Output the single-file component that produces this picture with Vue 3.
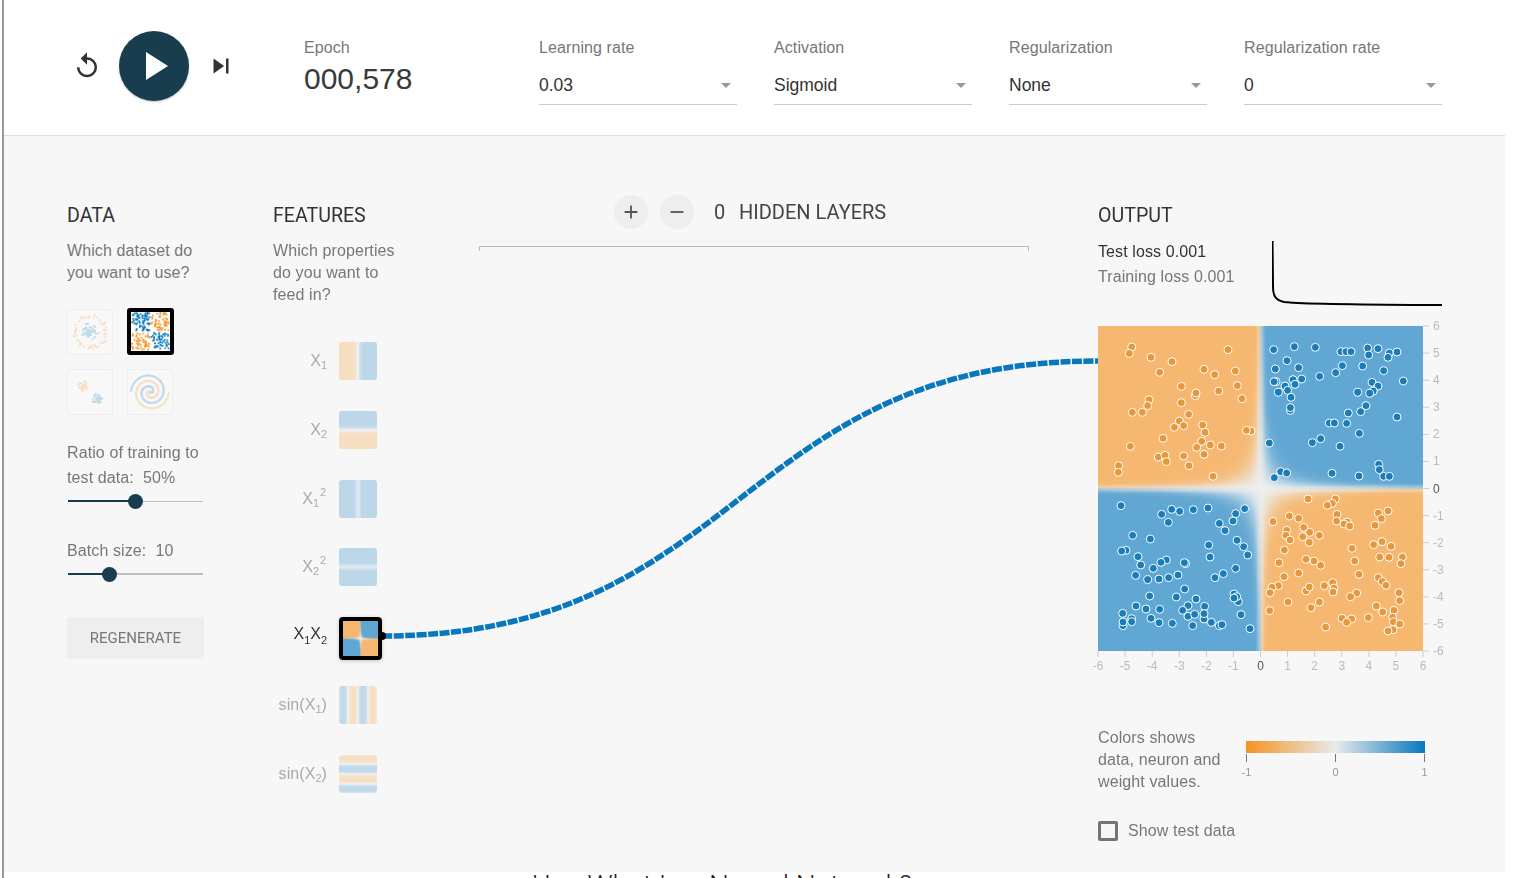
<script setup>
const selects = [
  { label: 'Learning rate', value: '0.03' },
  { label: 'Activation', value: 'Sigmoid' },
  { label: 'Regularization', value: 'None' },
  { label: 'Regularization rate', value: '0' },
]

const features = [
  { name: 'X', sub: '1', fn: (x) => Math.tanh(x * 1.1) },
  { name: 'X', sub: '2', fn: (x, y) => Math.tanh(y * 1.1) },
  { name: 'X', sub: '1', sup: '2', fn: (x) => 0.4 + 0.6 * Math.tanh(x * x) },
  { name: 'X', sub: '2', sup: '2', fn: (x, y) => 0.4 + 0.6 * Math.tanh(y * y) },
  { name: 'X', sub: '1', name2: 'X', sub2: '2', active: true, fn: (x, y) => Math.tanh(2 * x * y) },
  { name: 'sin(X', sub: '1', close: ')', fn: (x) => Math.tanh(1.6 * Math.sin(x)) },
  { name: 'sin(X', sub: '2', close: ')', fn: (x, y) => Math.tanh(1.6 * Math.sin(y)) },
]

// colour ramp of the playground: orange, light grey, blue
function ramp(t) {
  const a = t < 0 ? [245, 147, 34] : [8, 119, 189]
  const b = [232, 234, 235]
  const k = Math.abs(t)
  return a.map((v, i) => b[i] + (v - b[i]) * k)
}

function paintHeat(el, fn) {
  if (!el) return
  const ctx = el.getContext('2d')
  const img = ctx.createImageData(el.width, el.height)
  for (let py = 0; py < el.height; py++) {
    for (let px = 0; px < el.width; px++) {
      const x = ((px + 0.5) / el.width) * 12 - 6
      const y = 6 - ((py + 0.5) / el.height) * 12
      const c = ramp(fn(x, y))
      const i = (py * el.width + px) * 4
      img.data[i] = c[0]
      img.data[i + 1] = c[1]
      img.data[i + 2] = c[2]
      img.data[i + 3] = 160
    }
  }
  ctx.putImageData(img, 0, 0)
}

// small seeded random so the thumbnails come out the same each time
let seed = 42
function rnd() {
  seed = (seed * 16807) % 2147483647
  return seed / 2147483647
}

function circlePts() {
  const pts = []
  for (let i = 0; i < 60; i++) {
    const a = rnd() * Math.PI * 2
    const inner = rnd() * 2.4
    pts.push([Math.cos(a) * inner, Math.sin(a) * inner, 1])
    const b = rnd() * Math.PI * 2
    const r = 3.7 + rnd() * 1.2
    pts.push([Math.cos(b) * r, Math.sin(b) * r, -1])
  }
  return pts
}

function xorPts() {
  const pts = []
  for (let i = 0; i < 240; i++) {
    const x = (rnd() * 5.4 + 0.3) * (rnd() < 0.5 ? -1 : 1)
    const y = (rnd() * 5.4 + 0.3) * (rnd() < 0.5 ? -1 : 1)
    pts.push([x, y, x * y > 0 ? 1 : -1])
  }
  return pts
}

function gaussPts() {
  const pts = []
  for (let i = 0; i < 45; i++) {
    const a = rnd() * Math.PI * 2
    const r = rnd() * 1.5
    pts.push([-1.9 + Math.cos(a) * r, -1.7 + Math.sin(a) * r, -1])
    pts.push([1.9 + Math.sin(a) * r, 1.9 + Math.cos(a) * r, 1])
  }
  return pts
}

function spiralPts() {
  const pts = []
  for (let i = 0; i < 170; i++) {
    const r = (i / 170) * 5.2
    const a = (i / 170) * 1.75 * Math.PI * 2
    pts.push([r * Math.sin(a), r * Math.cos(a), 1])
    pts.push([-r * Math.sin(a), -r * Math.cos(a), -1])
  }
  return pts
}

const datasets = [
  { pts: circlePts() },
  { pts: xorPts(), active: true },
  { pts: gaussPts() },
  { pts: spiralPts() },
]

function paintData(el, pts) {
  if (!el) return
  const ctx = el.getContext('2d')
  const s = el.width / 12
  for (const [x, y, c] of pts) {
    ctx.fillStyle = c > 0 ? '#0877bd' : '#f59322'
    ctx.fillRect((x + 6) * s - 1, (y + 6) * s - 1, 1.9, 1.9)
  }
}

// dot positions read off the reference, in px inside the 325px heatmap
const top = (p) => [(p[0] - 24) / 3, (p[1] - 378) / 3]
const bottom = (p) => [(p[0] - 24) / 3, 154 + p[1] / 3]

const orangeDots = [
  ...[[125,441],[118,460],[183,472],[246,485],[414,449],[209,517],[342,508],[374,524],[436,513],[274,559],[442,557],[386,573],[316,587],[318,579],[177,599],[173,617],[127,637],[157,637],[274,608],[456,596],[296,643],[268,663],[281,677],[253,682],[338,675],[345,697],[483,693],[469,691],[219,715],[335,724],[361,735],[394,738],[320,742],[121,739],[342,763],[205,771],[225,766],[229,785],[281,768],[297,797],[86,797],[85,817],[369,829]].map(top),
  ...[[654,57],[736,57],[727,70],[712,76],[741,103],[598,108],[626,115],[549,125],[740,123],[865,99],[894,93],[874,116],[855,136],[772,126],[762,132],[779,138],[641,142],[590,151],[659,157],[588,166],[638,170],[688,166],[600,180],[658,187],[851,194],[876,185],[903,199],[583,210],[786,205],[869,231],[897,232],[937,231],[648,238],[672,243],[692,256],[794,243],[567,248],[933,251],[626,279],[807,283],[582,290],[865,293],[877,305],[888,316],[565,317],[546,322],[540,338],[648,333],[658,321],[703,317],[728,308],[732,324],[729,336],[927,338],[800,339],[782,350],[929,362],[594,366],[688,366],[663,383],[859,378],[878,396],[539,392],[912,391],[908,412],[910,425],[929,432],[835,413],[756,415],[785,417],[770,427],[707,441],[909,449],[894,453]].map(bottom),
]

const blueDots = [
  ...[[551,449],[613,440],[676,442],[753,455],[768,455],[783,455],[833,444],[864,446],[836,465],[898,459],[921,456],[894,472],[591,482],[556,507],[626,503],[757,497],[818,498],[881,512],[737,518],[689,529],[609,539],[635,537],[558,545],[552,545],[615,553],[585,558],[593,571],[565,577],[603,592],[940,543],[846,547],[864,558],[850,573],[839,580],[803,577],[828,617],[812,635],[775,639],[601,631],[601,623],[718,669],[733,669],[770,670],[921,651],[808,700],[692,716],[667,728],[538,729],[750,739],[866,793],[868,809],[572,815],[590,819],[726,820],[807,828],[881,829],[898,829],[553,833]].map(top),
  ...[[93,77],[215,103],[245,88],[269,94],[310,89],[354,84],[437,101],[464,86],[429,123],[235,127],[388,130],[405,152],[128,166],[181,177],[441,181],[461,200],[356,195],[108,211],[95,213],[144,230],[360,231],[473,225],[229,240],[213,247],[287,251],[283,248],[152,255],[190,265],[437,265],[400,281],[375,293],[137,286],[173,299],[207,297],[236,293],[264,285],[284,327],[179,348],[259,351],[318,357],[432,342],[445,365],[440,350],[432,354],[138,378],[168,387],[209,388],[294,377],[344,379],[278,391],[342,417],[342,401],[294,409],[314,403],[183,415],[453,404],[98,400],[125,416],[125,425],[99,437],[99,426],[207,428],[247,430],[364,427],[308,437],[388,437],[396,434],[480,446]].map(bottom),
]

const ticks = [-6, -5, -4, -3, -2, -1, 0, 1, 2, 3, 4, 5, 6]
const tickPos = (v) => ((v + 6) / 12) * 325
</script>

<template>
  <div class="shell">
    <header class="top">
      <div class="player">
        <svg class="icon" viewBox="0 0 24 24"><path d="M12 5V1L7 6l5 5V7c3.31 0 6 2.69 6 6s-2.69 6-6 6-6-2.69-6-6H4c0 4.42 3.58 8 8 8s8-3.58 8-8-3.58-8-8-8z" /></svg>
        <div class="play">
          <svg viewBox="0 0 24 24"><path d="M8 5v14l11-7z" /></svg>
        </div>
        <svg class="icon" viewBox="0 0 24 24"><path d="M6 18l8.5-6L6 6v12zM16 6v12h2V6h-2z" /></svg>
      </div>
      <div class="epoch">
        <div class="field-label">Epoch</div>
        <div class="epoch-value">000,578</div>
      </div>
      <div v-for="s in selects" :key="s.label" class="select">
        <div class="field-label">{{ s.label }}</div>
        <div class="select-box">
          <span>{{ s.value }}</span>
          <i class="arrow"></i>
        </div>
      </div>
    </header>

    <main class="main">
      <section class="col-data">
        <h4>DATA</h4>
        <p class="desc">Which dataset do<br />you want to use?</p>
        <div class="datasets">
          <div v-for="(d, i) in datasets" :key="i" class="dataset" :class="{ on: d.active }">
            <canvas width="44" height="44" :ref="(el) => paintData(el, d.pts)"></canvas>
          </div>
        </div>
        <p class="desc slider-label ratio">Ratio of training to<br />test data:&nbsp; 50%</p>
        <div class="slider"><div class="fill" style="width: 50%"></div><div class="thumb" style="left: 50%"></div></div>
        <p class="desc slider-label batch">Batch size:&nbsp; 10</p>
        <div class="slider thick"><div class="fill" style="width: 30.4%"></div><div class="thumb" style="left: 30.4%"></div></div>
        <button class="regen">REGENERATE</button>
      </section>

      <section class="col-features">
        <h4>FEATURES</h4>
        <p class="desc">Which properties<br />do you want to<br />feed in?</p>
        <div class="features">
          <div v-for="(f, i) in features" :key="i" class="feature" :class="{ on: f.active }">
            <div class="feature-label">
              {{ f.name }}<span class="scripts"><sup v-if="f.sup">{{ f.sup }}</sup><sub>{{ f.sub }}</sub></span>{{ f.close }}<template v-if="f.name2">{{ f.name2 }}<span class="scripts"><sub>{{ f.sub2 }}</sub></span></template>
            </div>
            <canvas class="thumb-canvas" width="38" height="38" :ref="(el) => paintHeat(el, f.fn)"></canvas>
          </div>
        </div>
      </section>

      <section class="col-network">
        <div class="layers">
          <div class="round">
            <svg viewBox="0 0 24 24"><path d="M19 13h-6v6h-2v-6H5v-2h6V5h2v6h6v2z" /></svg>
          </div>
          <div class="round">
            <svg viewBox="0 0 24 24"><path d="M19 13H5v-2h14v2z" /></svg>
          </div>
          <span class="layer-count">0</span>
          <span class="layer-title">HIDDEN LAYERS</span>
        </div>
        <div class="bracket"></div>
      </section>

      <section class="col-output">
        <h4>OUTPUT</h4>
        <div class="loss-row">
          <div class="loss">
            <div class="test-loss">Test loss 0.001</div>
            <div>Training loss 0.001</div>
          </div>
          <svg class="loss-chart" width="170" height="65" viewBox="0 0 170 65">
            <path d="M0.5 0 L1 45 C1 56 4 59 12 61 C30 63 70 63.5 170 64" />
          </svg>
        </div>
        <div class="plot">
          <canvas width="100" height="100" :ref="(el) => paintHeat(el, (x, y) => Math.tanh(2 * x * y))"></canvas>
          <svg class="plot-over" width="350" height="350" viewBox="0 0 350 350">
            <g v-for="v in ticks" :key="v">
              <line class="tick" :x1="325" :x2="331" :y1="325 - tickPos(v)" :y2="325 - tickPos(v)" />
              <text class="tick-text" :class="{ zero: v === 0 }" x="335" :y="329 - tickPos(v)">{{ v }}</text>
              <line class="tick" :x1="tickPos(v)" :x2="tickPos(v)" y1="325" y2="331" />
              <text class="tick-text" :class="{ zero: v === 0 }" text-anchor="middle" :x="tickPos(v)" y="344">{{ v }}</text>
            </g>
            <circle v-for="(p, i) in orangeDots" :key="'o' + i" class="dot" :cx="p[0]" :cy="p[1]" r="4" fill="#e8983c" />
            <circle v-for="(p, i) in blueDots" :key="'b' + i" class="dot" :cx="p[0]" :cy="p[1]" r="4" fill="#1a7dbb" />
          </svg>
        </div>
        <div class="legend">
          <p class="desc">Colors shows<br />data, neuron and<br />weight values.</p>
          <div class="scale">
            <div class="scale-bar"></div>
            <div class="scale-ticks">
              <span><i></i>-1</span>
              <span><i></i>0</span>
              <span><i></i>1</span>
            </div>
          </div>
        </div>
        <label class="check"><span class="box"></span>Show test data</label>
      </section>

      <svg class="links" width="1501" height="736" viewBox="0 0 1501 736">
        <path d="M378 500 C736 500 736 225 1094 225" />
        <circle cx="378" cy="500" r="4" />
      </svg>
    </main>

    <h2 class="below">Um, What Is a Neural Network?</h2>
  </div>
</template>

<style>
html,
body {
  overflow: hidden;
  background: #fff;
}
</style>

<style scoped>
.shell {
  width: 1501px;
  height: 878px;
  margin-left: 2px;
  border-left: 2px solid #999;
  overflow: hidden;
  font-family: "Liberation Sans", Arial, sans-serif;
  font-size: 16px;
  letter-spacing: 0.1px;
  color: #777;
}
.top {
  display: flex;
  height: 137px;
  box-sizing: border-box;
  padding: 31px 0 0 68px;
  background: #fff;
  border-top: 1px solid #eee;
  margin-top: -1px;
  border-bottom: 1px solid #ddd;
}
.player {
  display: flex;
  align-items: center;
  height: 70px;
  width: 232px;
  gap: 17px;
}
.icon {
  width: 30px;
  height: 30px;
  fill: #333;
}
.play {
  width: 70px;
  height: 70px;
  border-radius: 50%;
  background: #183d4e;
  box-shadow: 0 1px 2px rgba(0, 0, 0, 0.25);
  display: flex;
  align-items: center;
  justify-content: center;
}
.play svg {
  width: 48px;
  height: 48px;
  fill: #fff;
}
.field-label {
  margin-top: 8px;
  line-height: 18px;
  color: #777;
}
.epoch {
  width: 235px;
}
.epoch-value {
  font-size: 30px;
  line-height: 36px;
  margin-top: 4px;
  letter-spacing: 0;
  color: #3a3a3a;
}
.select {
  width: 198px;
  margin-right: 37px;
}
.select-box {
  display: flex;
  align-items: center;
  justify-content: space-between;
  height: 46px;
  box-sizing: border-box;
  margin-top: 2px;
  padding: 7px 6px 0 0;
  border-bottom: 1px solid #ccc;
  font-size: 17.5px;
  letter-spacing: 0;
  color: #333;
}
.arrow {
  width: 0;
  height: 0;
  border-left: 5px solid transparent;
  border-right: 5px solid transparent;
  border-top: 5px solid #999;
}

.main {
  position: relative;
  display: flex;
  height: 736px;
  box-sizing: border-box;
  padding: 68px 0 0 63px;
  background: #f7f7f7;
}
h4 {
  margin: 0;
  font-family: Roboto, sans-serif;
  font-weight: 400;
  font-size: 19.6px;
  line-height: 24px;
  letter-spacing: 0;
  color: #333;
}
.desc {
  margin: 12px 0 0;
  line-height: 22px;
}
.col-data {
  width: 137px;
  margin-right: 69px;
}
.datasets {
  display: grid;
  grid-template-columns: 46px 46px;
  gap: 14px;
  margin-top: 25px;
}
.dataset {
  width: 46px;
  height: 46px;
  box-sizing: border-box;
  border: 1px solid #ccc;
  border-radius: 3px;
  background: #fff;
  opacity: 0.22;
  display: flex;
  align-items: center;
  justify-content: center;
}
.dataset canvas {
  width: 100%;
  height: 100%;
}
.dataset.on {
  opacity: 1;
  border: 4px solid #000;
  width: 47px;
  height: 47px;
  margin-top: -1px;
}
.slider-label {
  line-height: 25px;
}
.ratio {
  margin-top: 25px;
}
.batch {
  margin-top: 26px;
}
.slider {
  position: relative;
  height: 22px;
  margin: 0 1px;
}
.slider::before,
.fill {
  content: "";
  position: absolute;
  left: 0;
  top: 10.5px;
  height: 1px;
  width: 100%;
  background: #bdbdbd;
}
.fill {
  height: 2px;
  top: 10px;
  background: #183d4e;
}
.thick::before {
  height: 2px;
  top: 10px;
}
.thumb {
  position: absolute;
  top: 3.5px;
  width: 15px;
  height: 15px;
  margin-left: -7.5px;
  border-radius: 50%;
  background: #183d4e;
}
.regen {
  display: block;
  width: 137px;
  height: 42px;
  margin-top: 32px;
  border: 0;
  border-radius: 3px;
  background: #eee;
  box-shadow: 0 0 1px rgba(0, 0, 0, 0.05);
  font-family: Roboto, sans-serif;
  font-size: 15px;
  color: #777;
}

.col-features {
  width: 206px;
}
.features {
  margin-top: 36px;
}
.feature {
  display: flex;
  align-items: flex-start;
  height: 68.75px;
}
.feature-label {
  width: 54px;
  margin-right: 12px;
  line-height: 38px;
  text-align: right;
  white-space: nowrap;
  color: #aaa;
  display: flex;
  justify-content: flex-end;
}
.scripts {
  position: relative;
  display: inline-block;
  min-width: 6px;
}
.scripts sub,
.scripts sup {
  font-size: 11px;
  line-height: 11px;
  position: absolute;
  left: 0;
}
.scripts sub {
  top: 18px;
}
.scripts sup {
  top: 7px;
  left: 7px;
}
.feature:nth-child(3) .scripts,
.feature:nth-child(4) .scripts {
  min-width: 14px;
}
.thumb-canvas {
  width: 38px;
  height: 38px;
  border-radius: 3px;
  opacity: 0.4;
}
.feature.on .feature-label {
  color: #333;
  line-height: 34px;
}
.feature.on .thumb-canvas {
  opacity: 1;
  width: 35px;
  height: 35px;
  border: 4px solid #000;
  border-radius: 4px;
  box-shadow: 0 1px 4px rgba(0, 0, 0, 0.2);
}

.col-network {
  width: 550px;
  margin-right: 69px;
}
.layers {
  display: flex;
  align-items: center;
  height: 34px;
  margin-top: -9px;
  padding-left: 135px;
  font-family: Roboto, sans-serif;
  font-size: 20px;
  letter-spacing: 0;
  color: #444;
}
.round {
  width: 34px;
  height: 34px;
  margin-right: 12px;
  border-radius: 50%;
  background: #eee;
  display: flex;
  align-items: center;
  justify-content: center;
}
.round svg {
  width: 22px;
  height: 22px;
  fill: #555;
}
.layer-count {
  margin-left: 8px;
  width: 25px;
}
.bracket {
  height: 4px;
  margin-top: 17px;
  border: 1px solid #bbb;
  border-bottom: 0;
}

.col-output {
  width: 344px;
}
.loss-row {
  display: flex;
  margin-top: 11px;
  line-height: 25px;
}
.loss {
  width: 174px;
}
.test-loss {
  color: #333;
}
.loss-chart {
  margin-top: 2px;
  fill: none;
  stroke: #000;
  stroke-width: 2;
}
.plot {
  position: relative;
  height: 401px;
  margin-top: 20px;
}
.plot canvas {
  display: block;
  width: 325px;
  height: 325px;
}
.plot-over {
  position: absolute;
  left: 0;
  top: 0;
  overflow: visible;
}
.tick {
  stroke: #ccc;
}
.tick-text {
  font-size: 12px;
  letter-spacing: 0;
  fill: #bbb;
}
.tick-text.zero {
  fill: #555;
}
.dot {
  stroke: #fff;
  stroke-width: 1;
}
.legend {
  display: flex;
}
.legend .desc {
  margin: 0;
  width: 148px;
}
.scale {
  width: 179px;
  padding-top: 14px;
}
.scale-bar {
  height: 12px;
  background: linear-gradient(90deg, #f59322, #e8eaeb 50%, #0877bd);
}
.scale-ticks {
  display: flex;
  justify-content: space-between;
  font-size: 11px;
  line-height: 12px;
  color: #999;
}
.scale-ticks span {
  position: relative;
  width: 1px;
  padding-top: 13px;
  display: flex;
  justify-content: center;
}
.scale-ticks i {
  position: absolute;
  left: 0;
  top: 1px;
  width: 1px;
  height: 8px;
  background: #777;
}
.check {
  display: flex;
  align-items: center;
  margin-top: 28px;
}
.box {
  width: 20px;
  height: 20px;
  box-sizing: border-box;
  margin-right: 10px;
  border: 3px solid #757575;
  border-radius: 2px;
}
.links {
  position: absolute;
  left: 0;
  top: 0;
  pointer-events: none;
}
.links path {
  fill: none;
  stroke: #0877bd;
  stroke-width: 5.5;
  stroke-dasharray: 10 1.5;
}
.below {
  margin: -3px 0 0;
  padding-left: 528px;
  font-family: Roboto, sans-serif;
  font-weight: 300;
  font-size: 28px;
  line-height: 34px;
  letter-spacing: 0;
  color: #222;
  white-space: nowrap;
}
</style>
